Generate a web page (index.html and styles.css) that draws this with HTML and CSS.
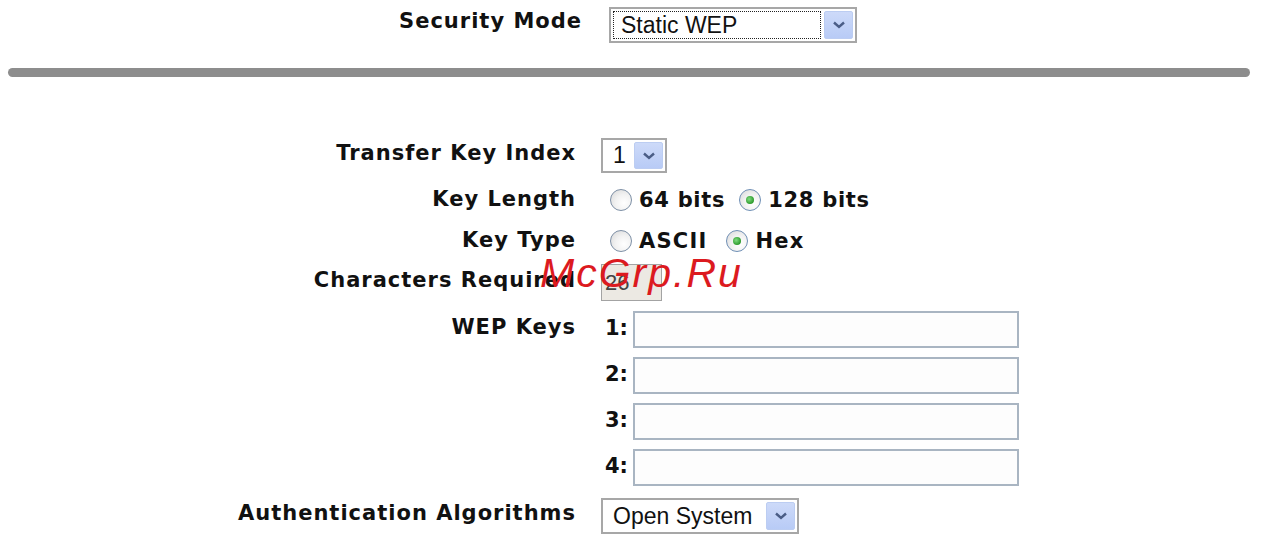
FILE: index.html
```html
<!DOCTYPE html>
<html>
<head>
<meta charset="utf-8">
<link rel="stylesheet" href="styles.css">
</head>
<body>
<div class="page">
  <div class="mode-row">
    <div class="mode-label">Security Mode</div>
    <div class="select select-mode">
      <span class="select-text focus">Static WEP</span>
      <span class="arrow"><svg viewBox="0 0 12 8" width="12" height="8"><path d="M1 1.5 L6 6 L11 1.5" fill="none" stroke="#4a5d86" stroke-width="2.4"/></svg></span>
    </div>
  </div>

  <div class="divider"></div>

  <div class="form">
    <div class="row r-index">
      <div class="label">Transfer Key Index</div>
      <div class="ctrl">
        <div class="select select-index">
          <span class="select-text">1</span>
          <span class="arrow"><svg viewBox="0 0 12 8" width="12" height="8"><path d="M1 1.5 L6 6 L11 1.5" fill="none" stroke="#4a5d86" stroke-width="2.4"/></svg></span>
        </div>
      </div>
    </div>

    <div class="row r-length">
      <div class="label">Key Length</div>
      <div class="ctrl radios">
        <span class="radio"></span><span class="rtext">64 bits</span>
        <span class="radio checked"></span><span class="rtext">128 bits</span>
      </div>
    </div>

    <div class="row r-type">
      <div class="label">Key Type</div>
      <div class="ctrl radios">
        <span class="radio"></span><span class="rtext">ASCII</span>
        <span class="radio checked"></span><span class="rtext">Hex</span>
      </div>
    </div>

    <div class="row r-chars">
      <div class="label">Characters Required</div>
      <div class="ctrl">
        <div class="chars">26</div>
      </div>
    </div>

    <div class="row r-key1">
      <div class="label">WEP Keys</div>
      <div class="ctrl"><span class="knum">1:</span><div class="textbox"></div></div>
    </div>
    <div class="row r-key">
      <div class="label"></div>
      <div class="ctrl"><span class="knum">2:</span><div class="textbox"></div></div>
    </div>
    <div class="row r-key">
      <div class="label"></div>
      <div class="ctrl"><span class="knum">3:</span><div class="textbox"></div></div>
    </div>
    <div class="row r-key">
      <div class="label"></div>
      <div class="ctrl"><span class="knum">4:</span><div class="textbox"></div></div>
    </div>

    <div class="row r-auth">
      <div class="label">Authentication Algorithms</div>
      <div class="ctrl">
        <div class="select select-auth">
          <span class="select-text">Open System</span>
          <span class="arrow"><svg viewBox="0 0 12 8" width="12" height="8"><path d="M1 1.5 L6 6 L11 1.5" fill="none" stroke="#4a5d86" stroke-width="2.4"/></svg></span>
        </div>
      </div>
    </div>
  </div>

  <div class="watermark">McGrp.Ru</div>
</div>
</body>
</html>
```

FILE: styles.css
```css
html, body {
  margin: 0;
  padding: 0;
  background: #ffffff;
}

.page {
  position: relative;
  width: 1265px;
  height: 546px;
  overflow: hidden;
  font-family: "DejaVu Sans", Verdana, sans-serif;
  font-weight: bold;
  font-size: 21px;
  letter-spacing: 1px;
  color: #111;
}

.mode-row {
  display: flex;
  align-items: center;
  padding-top: 7px;
  height: 36px;
}

.mode-label {
  width: 582px;
  text-align: right;
  padding-bottom: 9px;
  margin-right: 27px;
}

.select {
  display: flex;
  align-items: center;
  justify-content: space-between;
  box-sizing: border-box;
  border: 2px solid #a7a7a7;
  background: #ffffff;
  padding: 2px;
  font-family: "Liberation Sans", Arial, sans-serif;
  font-weight: normal;
  font-size: 23px;
  letter-spacing: 0;
  color: #111;
}

.select-text {
  box-sizing: border-box;
  height: 100%;
  display: flex;
  align-items: center;
  padding-left: 8px;
}

.select-text.focus {
  border: 1px dotted #222;
  padding-left: 7px;
  flex: 1;
  margin-right: 3px;
}

.arrow {
  box-sizing: border-box;
  width: 29px;
  height: 100%;
  display: flex;
  align-items: center;
  justify-content: center;
  background: linear-gradient(180deg, #cddaf9 0%, #b8cbf6 100%);
  border: 1px solid #bccdf2;
  border-radius: 2px;
}

.select-mode {
  width: 248px;
  height: 36px;
}

.select-index {
  width: 66px;
  height: 35px;
}

.select-auth {
  width: 198px;
  height: 36px;
}

.divider {
  margin: 25px 15px 0 8px;
  height: 9px;
  border-radius: 5px;
  background: #8d8d8d;
}

.form {
  display: flex;
  flex-direction: column;
}

.row {
  display: flex;
  align-items: center;
}

.label {
  width: 576px;
  text-align: right;
  margin-right: 25px;
  padding-bottom: 6px;
  white-space: nowrap;
}

.ctrl {
  display: flex;
  align-items: center;
}

.r-index { margin-top: 61px; height: 35px; }
.r-length { margin-top: 15px; height: 24px; }
.r-type { margin-top: 17px; height: 24px; }
.r-chars { margin-top: 11px; height: 37px; }
.r-key1 { margin-top: 10px; height: 37px; }
.r-key { margin-top: 9px; height: 37px; }
.r-auth { margin-top: 12px; height: 36px; }

.r-length .label, .r-type .label { padding-bottom: 2px; }

.radios {
  padding-left: 9px;
}

.radio {
  box-sizing: border-box;
  width: 22px;
  height: 22px;
  border-radius: 50%;
  border: 1px solid #7d8fa5;
  background: radial-gradient(circle at 65% 65%, #ffffff 0%, #f2f2f2 45%, #d6d6d6 100%);
  position: relative;
  margin-right: 7px;
}

.radio.checked {
  border-color: #6f8fb5;
}

.radio.checked::after {
  content: "";
  position: absolute;
  left: 6px;
  top: 6px;
  width: 8px;
  height: 8px;
  border-radius: 50%;
  background: radial-gradient(circle at 40% 40%, #7fdc7f 0%, #2d9a2d 70%);
}

.rtext {
  margin-right: 14px;
  letter-spacing: 0.7px;
}

.r-type .rtext { margin-right: 19px; letter-spacing: 1.2px; }

.chars {
  box-sizing: border-box;
  width: 61px;
  height: 37px;
  border: 1px solid #a3a3a3;
  background: #ece9e3;
  font-family: "Liberation Sans", Arial, sans-serif;
  font-weight: normal;
  font-size: 22px;
  letter-spacing: 0;
  color: #444;
  display: flex;
  align-items: center;
  padding-left: 3px;
}

.knum {
  width: 27px;
  text-align: right;
  margin-right: 5px;
  padding-bottom: 3px;
  letter-spacing: 0;
}

.textbox {
  box-sizing: border-box;
  width: 386px;
  height: 37px;
  border: 2px solid #a9b5c2;
  background: #fdfdfd;
}

.watermark {
  position: absolute;
  left: 540px;
  top: 250px;
  font-family: "Liberation Sans", Arial, sans-serif;
  font-style: italic;
  font-weight: normal;
  font-size: 41px;
  letter-spacing: 2px;
  color: #dc1a1f;
}
```
